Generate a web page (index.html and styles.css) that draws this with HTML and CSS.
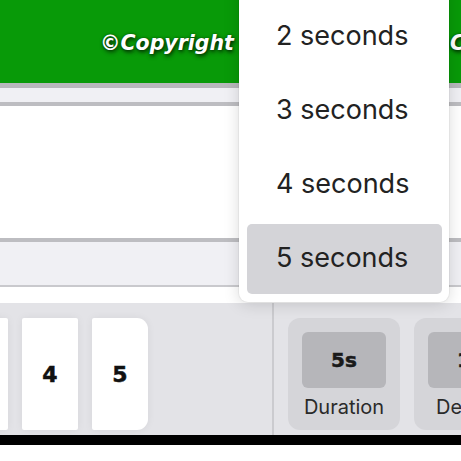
FILE: index.html
```html
<!DOCTYPE html>
<html>
<head>
<meta charset="utf-8">
<link rel="stylesheet" href="styles.css">
</head>
<body>
<div class="page">
  <header class="header">
    <span class="copyright">©Copyright 2024 Slideshow ©Copyright</span>
  </header>
  <div class="rule rule-top"></div>
  <div class="band band-a"></div>
  <div class="rule"></div>
  <div class="panel panel-main"></div>
  <div class="rule"></div>
  <div class="band band-b"></div>
  <div class="rule rule-thin"></div>
  <div class="panel panel-slim"></div>
  <div class="toolbar">
    <div class="strip">
      <div class="track">
        <div class="card">2</div>
        <div class="card">3</div>
        <div class="card">4</div>
        <div class="card card-last">5</div>
      </div>
    </div>
    <div class="divider"></div>
    <div class="tiles">
      <div class="tile">
        <div class="tile-box">5s</div>
        <div class="tile-label">Duration</div>
      </div>
      <div class="tile">
        <div class="tile-box">1s</div>
        <div class="tile-label">Default</div>
      </div>
    </div>
  </div>
  <div class="footer-bar"></div>

  <ul class="menu">
    <li class="menu-item">1 second</li>
    <li class="menu-item">2 seconds</li>
    <li class="menu-item">3 seconds</li>
    <li class="menu-item">4 seconds</li>
    <li class="menu-item is-selected">5 seconds</li>
  </ul>
</div>
</body>
</html>
```

FILE: styles.css
```css
html, body {
  margin: 0;
  padding: 0;
  background: #ffffff;
  overflow: hidden;
}
.page {
  position: relative;
  width: 461px;
  height: 461px;
  overflow: hidden;
  display: flex;
  flex-direction: column;
  font-family: Inter, "Noto Sans", sans-serif;
}
.header {
  height: 83px;
  flex: none;
  background: #089a08;
  display: flex;
  align-items: center;
  padding-left: 100px;
  white-space: nowrap;
  overflow: hidden;
}
.copyright {
  font-family: "DejaVu Sans", sans-serif;
  font-weight: bold;
  font-style: oblique;
  font-size: 20.5px;
  color: #ffffff;
  text-shadow: 1px 2px 4px rgba(0,0,0,0.8), 0 0 2px rgba(0,0,0,0.4);
  margin-top: 2px;
}
.rule {
  height: 4px;
  flex: none;
  background: #bdbdc1;
}
.rule-top {
  height: 5px;
  background: #b8b8bc;
}
.rule-thin {
  height: 2px;
  background: #c9c9cd;
}
.band {
  flex: none;
  background: #f0f0f4;
}
.band-a { height: 14px; }
.band-b { height: 43px; }
.panel {
  flex: none;
  background: #ffffff;
}
.panel-main { height: 132px; }
.panel-slim { height: 16px; }
.toolbar {
  flex: none;
  height: 132px;
  background: #e3e3e7;
  display: flex;
}
.strip {
  width: 272px;
  overflow: hidden;
  flex: none;
}
.track {
  display: flex;
  gap: 14px;
  margin-left: -118px;
  padding-top: 15px;
}
.card {
  flex: none;
  width: 56px;
  height: 112px;
  background: #ffffff;
  border-radius: 2px;
  box-shadow: 0 0 8px rgba(0,0,0,0.06);
  display: flex;
  align-items: center;
  justify-content: center;
  font-family: "DejaVu Sans", sans-serif;
  font-weight: bold;
  font-size: 22px;
  color: #111;
  -webkit-text-stroke: 0.5px #111;
}
.card-last {
  border-radius: 2px 11px 11px 2px;
}
.divider {
  width: 2px;
  flex: none;
  background: #cbcbcf;
}
.tiles {
  display: flex;
  gap: 14px;
  padding: 15px 0 0 14px;
}
.tile {
  flex: none;
  width: 112px;
  height: 112px;
  box-sizing: border-box;
  padding: 14px;
  background: #d5d5d9;
  border-radius: 12px;
  display: flex;
  flex-direction: column;
  align-items: center;
}
.tile-box {
  flex: none;
  width: 84px;
  height: 56px;
  background: #b6b6ba;
  border-radius: 6px;
  display: flex;
  align-items: center;
  justify-content: center;
  font-family: "DejaVu Sans", sans-serif;
  font-weight: bold;
  font-size: 20px;
  color: #1a1a1a;
  -webkit-text-stroke: 0.5px #1a1a1a;
}
.tile-label {
  margin-top: 7px;
  font-size: 20px;
  color: #2a2a2a;
  line-height: 24px;
  white-space: nowrap;
}
.footer-bar {
  flex: none;
  height: 10px;
  background: #000000;
}
.menu {
  position: absolute;
  top: -80px;
  left: 239px;
  width: 210px;
  box-sizing: border-box;
  margin: 0;
  padding: 8px 7px 8px 8px;
  list-style: none;
  background: #ffffff;
  border-radius: 0 0 9px 9px;
  box-shadow: 0 2px 16px rgba(0,0,0,0.15), 0 0 0 1px rgba(0,0,0,0.04);
  display: flex;
  flex-direction: column;
  gap: 4px;
}
.menu-item {
  height: 70px;
  box-sizing: border-box;
  padding: 0 0 3px 29px;
  display: flex;
  align-items: center;
  font-size: 27px;
  color: #222222;
  border-radius: 5px;
}
.menu-item.is-selected {
  background: #d4d4d8;
}
```
